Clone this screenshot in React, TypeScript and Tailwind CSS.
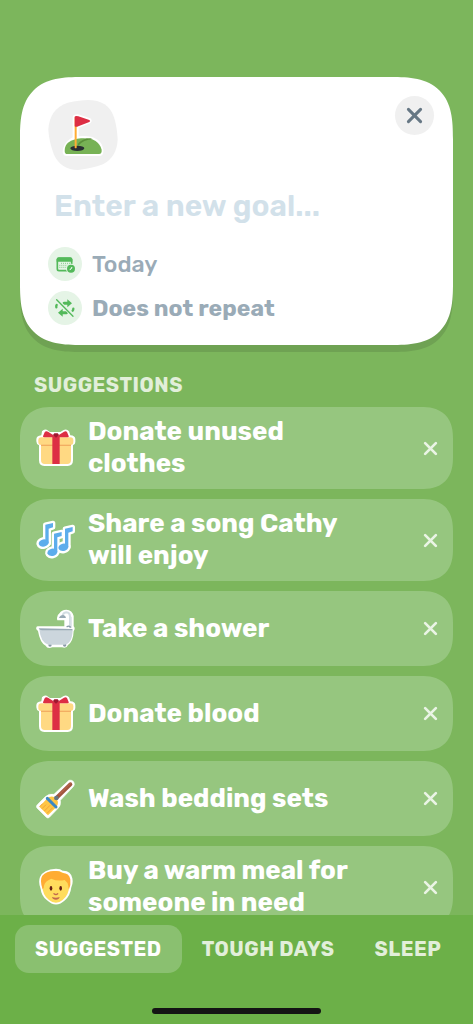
import type { ReactNode } from 'react';

const GiftIcon = () => (
    <svg viewBox="48 54 120 120" className="size-10 shrink-0" aria-hidden="true">
        <path
            d="M66 64Q72 56 80 59L90 66H121L131 60Q140 55 147 64L151 76Q166 77 166 88V96Q166 103 159 106V151Q159 168 143 168H73Q57 168 57 151V106Q49 103 49 94V88Q49 78 64 76Z"
            fill="#fff"
        />
        <path d="M63 96H153V150Q153 162 142 162H74Q63 162 63 150Z" fill="#FFD983" />
        <rect x="55" y="82" width="105" height="23" rx="9" fill="#FFD983" />
        <path d="M63 104H153V108H63Z" fill="#F2AE62" />
        <path d="M97 80H119V162H97Z" fill="#DD2E44" />
        <path d="M108 80L84 65Q77 62 74 67L69 79Q68 82 74 82H142Q148 82 146 78L141 66Q138 62 132 65Z" fill="#DD2E44" />
        <path d="M99 75L108 83L117 75L113 70H103Z" fill="#A0172F" />
    </svg>
);

const notes = (
    <>
        <path d="M76 74L99 69V82L86 86V130H76Z" />
        <ellipse cx="71" cy="129" rx="15" ry="11" transform="rotate(-12 71 129)" />
        <path d="M102 101L125 96V108L112 112V157H102Z" />
        <ellipse cx="97" cy="157" rx="15" ry="11" transform="rotate(-12 97 157)" />
        <path d="M135 86L158 81V94L145 98V142H135Z" />
        <ellipse cx="130" cy="142" rx="15" ry="11" transform="rotate(-12 130 142)" />
    </>
);

const MusicIcon = () => (
    <svg viewBox="48 60 120 120" className="size-10 shrink-0" aria-hidden="true">
        <g fill="#fff" stroke="#fff" strokeWidth="14" strokeLinejoin="round">{notes}</g>
        <g fill="#5DADEC">{notes}</g>
    </svg>
);

const BathIcon = () => (
    <svg viewBox="48 55 120 120" className="size-10 shrink-0" aria-hidden="true">
        <path
            d="M53 107Q47 108 49 116L54 121Q60 157 77 165Q82 176 97 170H126Q139 175 144 163Q160 152 161 121Q167 113 161 107V76Q157 58 139 57Q124 58 119 67Q108 75 112 89H133V107Z"
            fill="#fff"
        />
        <circle cx="90" cy="163" r="5" fill="#8899A6" />
        <circle cx="134" cy="163" r="5" fill="#8899A6" />
        <path d="M58 116H158Q157 160 134 162H85Q62 156 58 116Z" fill="#CCD6DD" />
        <path d="M56 113Q58 119 66 119H157V115Z" fill="#99AAB5" />
        <path d="M150 112V79Q150 66 139 65Q129 66 128 76" fill="none" stroke="#D3DDE3" strokeWidth="6" />
        <path d="M117 82Q120 73 130 73Q137 75 138 82Z" fill="#99AAB5" />
        <path d="M154 78V112" stroke="#E1E8ED" strokeWidth="4" />
        <path d="M141 108Q146 104 151 109" fill="none" stroke="#8899A6" strokeWidth="4" strokeLinecap="round" />
    </svg>
);

const BroomIcon = () => (
    <svg viewBox="48 55 120 120" className="size-10 shrink-0" aria-hidden="true">
        <path
            d="M147 59Q161 56 163 71Q162 78 156 82L121 119Q124 134 114 143L88 170Q84 174 79 170L51 142Q47 137 52 132L76 108Q87 98 102 101Z"
            fill="#fff"
            stroke="#fff"
            strokeWidth="2"
        />
        <path d="M111 110L151 71" stroke="#A0563F" strokeWidth="12" strokeLinecap="round" />
        <path d="M118 101L152 67" stroke="#C1694F" strokeWidth="3" strokeLinecap="round" />
        <path d="M58 138L80 115Q90 105 102 109L113 120Q116 132 107 141L84 164Z" fill="#FFC645" />
        <path d="M66 144L78 132M73 151L90 134M81 158L98 141M59 138L68 129" stroke="#F4A33A" strokeWidth="3" />
        <path d="M82 113L108 139" stroke="#3B88C3" strokeWidth="9" strokeLinecap="round" />
        <circle cx="109" cy="112" r="7" fill="#66757F" />
    </svg>
);

const FaceIcon = () => (
    <svg viewBox="48 81 120 120" className="size-10 shrink-0" aria-hidden="true">
        <path
            d="M108 86Q122 86 128 92Q153 91 157 115Q160 130 154 142Q151 167 135 181Q108 206 81 181Q64 168 62 147Q54 126 60 111Q70 88 108 86Z"
            fill="#fff"
        />
        <path d="M107 93Q145 94 148 135Q147 165 128 180Q108 197 87 180Q67 164 67 137Q67 97 107 93Z" fill="#FFDC5D" />
        <path
            d="M68 148Q58 120 67 107Q80 91 109 93Q121 93 126 99Q147 98 151 118Q153 135 147 148Q145 148 145 138Q143 126 134 120Q112 125 94 116Q74 124 72 137Q72 147 68 148Z"
            fill="#FFAC33"
        />
        <ellipse cx="93" cy="145" rx="4" ry="7" fill="#662113" />
        <ellipse cx="122" cy="145" rx="4" ry="7" fill="#662113" />
        <path d="M102 161Q108 166 113 161" fill="none" stroke="#C1694F" strokeWidth="4" strokeLinecap="round" />
        <path d="M96 171Q108 176 119 171Q117 179 108 179Q98 179 96 171Z" fill="#C1694F" />
    </svg>
);

const GolfIcon = () => (
    <svg viewBox="112 101 210 210" className="size-[70px]" aria-hidden="true">
        <path
            d="M171 109Q209 102 231 101Q293 101 310 153Q319 181 321 219Q319 272 277 294Q243 307 202 311Q151 310 130 265Q115 226 113 190Q116 128 171 109Z"
            fill="#F0F0F0"
        />
        <path
            d="M186 153Q187 143 202 144L239 156Q247 164 239 171L204 184V210Q270 204 278 250Q280 268 267 269H167Q153 267 157 247Q164 224 186 213Z"
            fill="#fff"
        />
        <path d="M162 253Q162 221 211 216Q263 213 273 250Q274 263 265 263H170Q162 263 162 253Z" fill="#77B255" />
        <path d="M203 238Q218 220 247 219L239 216Q215 216 201 233Z" fill="#5C913B" />
        <ellipse cx="200" cy="246" rx="21" ry="8" fill="#292F33" />
        <path d="M192 153H198V244Q195 248 192 244Z" fill="#FFAC33" />
        <path d="M192 151Q194 148 203 150L236 161Q241 164 236 167L203 180Q196 183 192 180Z" fill="#DD2E44" />
    </svg>
);

const CalendarIcon = () => (
    <svg viewBox="116 52 102 102" className="size-[34px] shrink-0" aria-hidden="true">
        <circle cx="167" cy="103" r="51" fill="#E5F4E6" />
        <rect x="144" y="86" width="43" height="37" rx="5" fill="none" stroke="#53B95A" strokeWidth="5" />
        <path d="M142 96V89Q142 83 148 83H183Q189 83 189 89V96Z" fill="#53B95A" />
        <path d="M155 101H182M150 107H176M150 113H172" stroke="#53B95A" strokeWidth="2" strokeDasharray="3 3" />
        <circle cx="185" cy="117" r="15" fill="#E5F4E6" />
        <circle cx="185" cy="117" r="12" fill="#53B95A" />
        <path d="M188 112L185 118L181 120" fill="none" stroke="#fff" strokeWidth="3" />
    </svg>
);

const NoRepeatIcon = () => (
    <svg viewBox="116 183 102 102" className="size-[34px] shrink-0" aria-hidden="true">
        <circle cx="167" cy="234" r="51" fill="#E5F4E6" />
        <g fill="none" stroke="#53B95A" strokeWidth="7" strokeLinecap="round">
            <path d="M164 220H176M158 248H171" strokeWidth="9" />
            <path d="M142 225Q140 228 141 232M192 236Q192 240 190 242" />
        </g>
        <path d="M174 208L188 220L174 232Z" fill="#53B95A" />
        <path d="M160 236L146 248L160 260Z" fill="#53B95A" />
        <path d="M142 208L192 259" stroke="#E5F4E6" strokeWidth="9" />
        <path d="M142 209L191 259" stroke="#53B95A" strokeWidth="4" strokeLinecap="round" />
    </svg>
);

const CloseIcon = ({ className }: { className: string }) => (
    <svg viewBox="0 0 14 14" className={className} fill="none" stroke="currentColor" strokeLinecap="round" aria-hidden="true">
        <path d="M2 2L12 12M12 2L2 12" />
    </svg>
);

const SUGGESTIONS: { title: string; icon: ReactNode }[] = [
    { title: 'Donate unused clothes', icon: <GiftIcon /> },
    { title: 'Share a song Cathy will enjoy', icon: <MusicIcon /> },
    { title: 'Take a shower', icon: <BathIcon /> },
    { title: 'Donate blood', icon: <GiftIcon /> },
    { title: 'Wash bedding sets', icon: <BroomIcon /> },
    { title: 'Buy a warm meal for someone in need', icon: <FaceIcon /> },
];

const TABS = ['SUGGESTED', 'TOUGH DAYS', 'SLEEP'];

function GoalCard() {
    return (
        <section className="relative rounded-[62px] [corner-shape:superellipse(1.5)] bg-white px-7 pt-[23px] pb-5 shadow-[0_7px_0_#6fa253]">
            <button type="button" aria-label="Choose icon" className="block">
                <GolfIcon />
            </button>
            <button
                type="button"
                aria-label="Close"
                className="absolute top-[19px] right-[19px] flex size-[39px] items-center justify-center rounded-full bg-[#f0f0f0] text-[#667784]"
            >
                <CloseIcon className="size-[17px] stroke-[2.5]" />
            </button>
            <input
                type="text"
                aria-label="Goal"
                placeholder="Enter a new goal..."
                className="mt-4 block h-10 w-full bg-transparent px-[6px] text-[30px] font-semibold text-[#667784] outline-none placeholder:text-[#d2e1ea]"
            />
            <button type="button" className="mt-[21px] flex items-center gap-[10px] text-[23px] leading-[34px] font-medium text-[#9aabb7]">
                <CalendarIcon />
                Today
            </button>
            <button type="button" className="mt-[10px] flex items-center gap-[10px] text-[23px] leading-[34px] font-bold text-[#9aabb7]">
                <NoRepeatIcon />
                Does not repeat
            </button>
        </section>
    );
}

export default function App() {
    return (
        <div className="flex h-screen flex-col overflow-hidden bg-[#7cb65c] font-['Rubik','Inter',sans-serif]">
            <main className="flex min-h-0 flex-1 flex-col px-5 pt-[77px]">
                <GoalCard />
                <h2 className="mt-7 px-[14px] text-[20px] leading-6 font-bold tracking-wide text-[#e2efda]">SUGGESTIONS</h2>
                <ul className="mt-[10px] flex min-h-0 flex-1 flex-col gap-[10px] overflow-hidden">
                    {SUGGESTIONS.map((item) => (
                        <li
                            key={item.title}
                            className="flex min-h-[75px] shrink-0 items-center rounded-[32px] [corner-shape:superellipse(1.3)] bg-[#96c67f] py-[9px] pr-[13px] pl-4"
                        >
                            {item.icon}
                            <button type="button" className="ml-3 flex-1 pr-16 text-left text-[26px] leading-8 font-bold text-white">
                                {item.title}
                            </button>
                            <button type="button" aria-label={`Dismiss ${item.title}`} className="p-[2px] text-[#eaf4e5]">
                                <CloseIcon className="size-[15px] stroke-[2.5]" />
                            </button>
                        </li>
                    ))}
                </ul>
            </main>
            <footer className="shrink-0 bg-[#6cb048] pt-[10px] pb-[10px]">
                <nav className="flex px-[15px]">
                    {TABS.map((tab, i) => (
                        <button
                            key={tab}
                            type="button"
                            className={`h-12 shrink-0 rounded-[14px] px-5 text-[20px] font-bold tracking-wide ${i === 0 ? 'bg-[#8ac070] text-white' : 'text-[#e2efda]'}`}
                        >
                            {tab}
                        </button>
                    ))}
                </nav>
                <div className="mx-auto mt-[35px] h-[6px] w-[169px] rounded-full bg-[#141414]" />
            </footer>
        </div>
    );
}
